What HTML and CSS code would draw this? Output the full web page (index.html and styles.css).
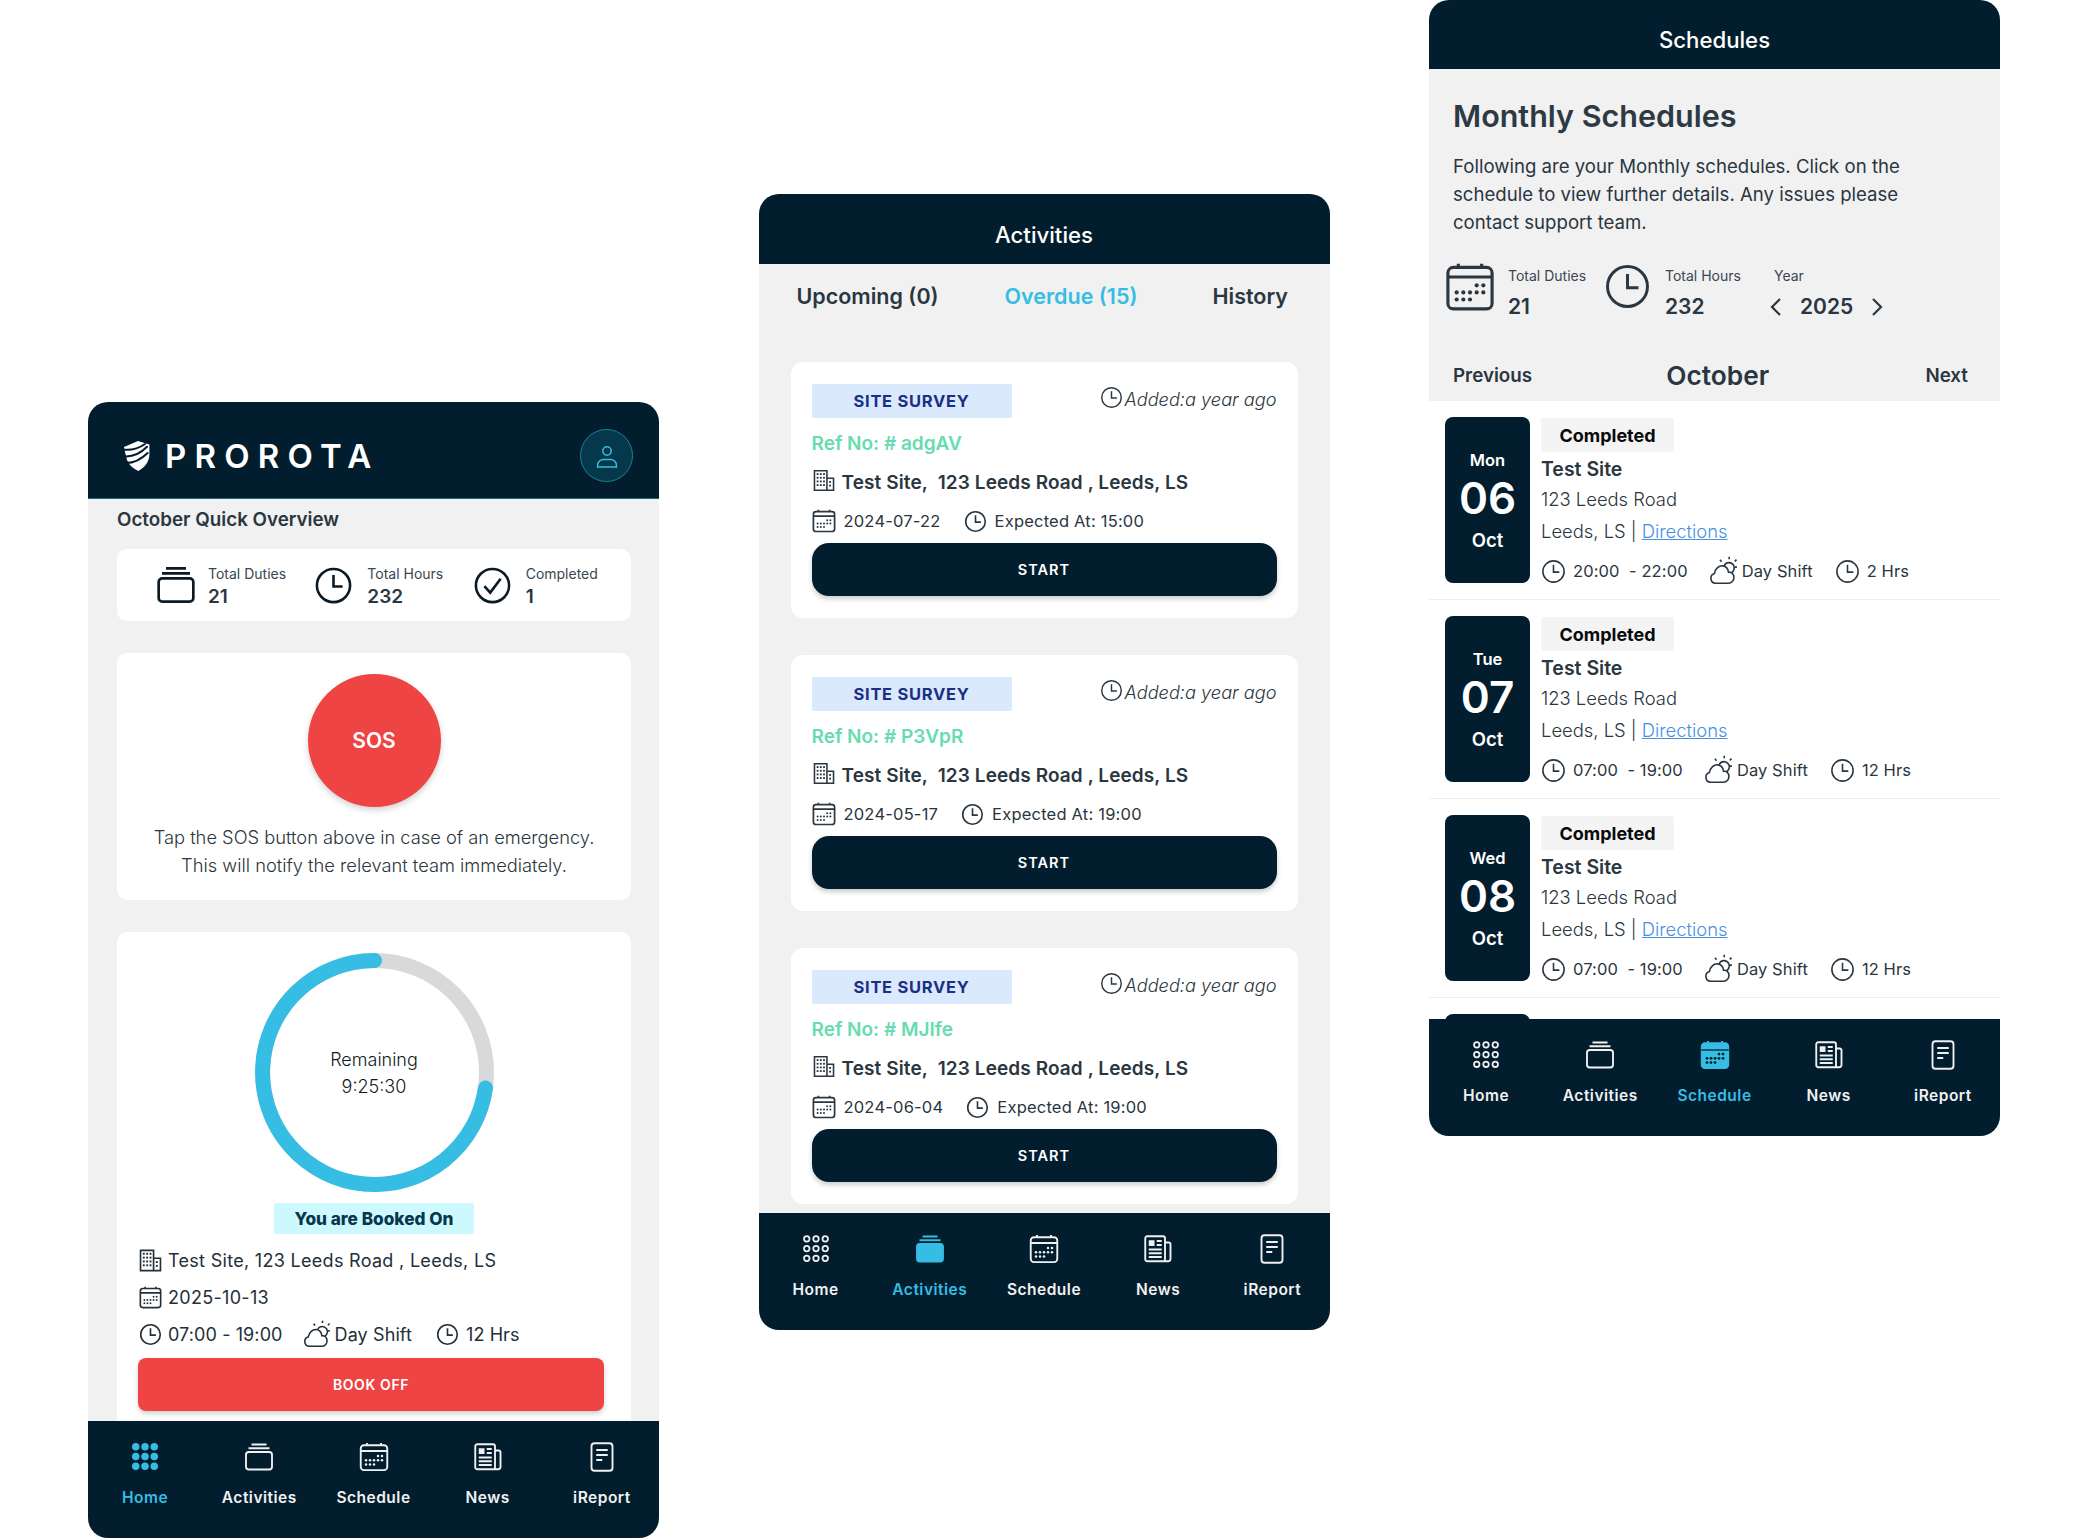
FILE: index.html
```html
<!DOCTYPE html>
<html lang="en">
<head>
  <meta charset="UTF-8" />
  <meta name="viewport" content="width=device-width, initial-scale=1.0"/>
  <title>Prorota</title>
  <link rel="stylesheet" href="styles.css">
</head>
<body>
  <svg class="sprite" width="0" height="0">
    <symbol id="i-clock" viewBox="0 0 24 24"><circle cx="12" cy="12" r="10.2"/><path d="M12 5.6v7h5.6"/></symbol>
    <symbol id="i-check" viewBox="0 0 24 24"><circle cx="12" cy="12" r="10.2"/><path d="M7 12.4l3.6 4 6.4-8.6"/></symbol>
    <symbol id="i-stack" viewBox="0 0 24 24"><rect x="1.6" y="8" width="20.8" height="14" rx="2.2"/><path d="M3.6 5h16.8M6 2h12"/></symbol>
    <symbol id="i-stack-fill" viewBox="0 0 24 24"><rect x="1.6" y="8" width="20.8" height="14" rx="2.2" fill="currentColor"/><path d="M3.6 5h16.8M6 2h12"/></symbol>
    <symbol id="i-cal" viewBox="0 0 24 24">
      <rect x="1.4" y="2.6" width="21.2" height="19.9" rx="2.6"/><path d="M1.4 7.2h21.2M6.4 .8v1.8M17.6 .8v1.8"/>
      <g fill="currentColor" stroke="none"><circle cx="15.2" cy="11.2" r="1"/><circle cx="18.4" cy="11.2" r="1"/><circle cx="5.6" cy="14.6" r="1"/><circle cx="8.8" cy="14.6" r="1"/><circle cx="12" cy="14.6" r="1"/><circle cx="15.2" cy="14.6" r="1"/><circle cx="18.4" cy="14.6" r="1"/><circle cx="5.6" cy="18" r="1"/><circle cx="8.8" cy="18" r="1"/><circle cx="12" cy="18" r="1"/></g>
    </symbol>
    <symbol id="i-cal-fill" viewBox="0 0 24 24">
      <rect x="1.4" y="2.6" width="21.2" height="19.9" rx="2.6" fill="currentColor"/><path d="M6.4 .8v1.8M17.6 .8v1.8M1.4 7.2h21.2" />
      <path d="M1 8h22" stroke="#021e2e" stroke-width="1"/>
      <g fill="#021e2e" stroke="none"><circle cx="15.2" cy="11.2" r="1.1"/><circle cx="18.4" cy="11.2" r="1.1"/><circle cx="5.6" cy="14.6" r="1.1"/><circle cx="8.8" cy="14.6" r="1.1"/><circle cx="12" cy="14.6" r="1.1"/><circle cx="15.2" cy="14.6" r="1.1"/><circle cx="18.4" cy="14.6" r="1.1"/><circle cx="5.6" cy="18" r="1.1"/><circle cx="8.8" cy="18" r="1.1"/><circle cx="12" cy="18" r="1.1"/></g>
    </symbol>
    <symbol id="i-dots" viewBox="0 0 24 24">
      <g stroke-width="1.4"><circle cx="4.6" cy="3.8" r="2.2"/><circle cx="12" cy="3.8" r="2.2"/><circle cx="19.4" cy="3.8" r="2.2"/><circle cx="4.6" cy="11.6" r="2.2"/><circle cx="12" cy="11.6" r="2.2"/><circle cx="19.4" cy="11.6" r="2.2"/><circle cx="4.6" cy="19.4" r="2.2"/><circle cx="12" cy="19.4" r="2.2"/><circle cx="19.4" cy="19.4" r="2.2"/></g>
    </symbol>
    <symbol id="i-dots-fill" viewBox="0 0 24 24">
      <g fill="currentColor" stroke="none"><circle cx="4.6" cy="3.8" r="3"/><circle cx="12" cy="3.8" r="3"/><circle cx="19.4" cy="3.8" r="3"/><circle cx="4.6" cy="11.6" r="3"/><circle cx="12" cy="11.6" r="3"/><circle cx="19.4" cy="11.6" r="3"/><circle cx="4.6" cy="19.4" r="3"/><circle cx="12" cy="19.4" r="3"/><circle cx="19.4" cy="19.4" r="3"/></g>
    </symbol>
    <symbol id="i-news" viewBox="0 0 24 24">
      <path d="M17.6 21.8H3.4a1.6 1.6 0 0 1-1.6-1.6V3.4a1.6 1.6 0 0 1 1.6-1.6h12.6a1.6 1.6 0 0 1 1.6 1.6zM17.6 6.8h3a1.4 1.4 0 0 1 1.4 1.4v11.6a2 2 0 0 1-2 2h-2.4"/>
      <rect x="4.6" y="5" width="4.6" height="4.6" fill="currentColor" stroke="none"/>
      <path d="M11 5.6h4M11 8.8h4M4.6 12.4h10.4M4.6 15.4h10.4M4.6 18.4h10.4"/>
    </symbol>
    <symbol id="i-report" viewBox="0 0 24 24"><rect x="3.6" y="1" width="16.8" height="22" rx="2.4"/><path d="M7.4 6.4h9.2M7.4 10.4h9.2M7.4 14.4h4.8"/></symbol>
    <symbol id="i-building" viewBox="0 0 24 24">
      <path d="M1.6 22.6V1.4h13.6v21.2zM15.2 9.6h7.2v13H1"/>
      <g fill="currentColor" stroke="none"><rect x="4" y="4" width="2" height="2"/><rect x="7.5" y="4" width="2" height="2"/><rect x="11" y="4" width="2" height="2"/><rect x="4" y="8" width="2" height="2"/><rect x="7.5" y="8" width="2" height="2"/><rect x="11" y="8" width="2" height="2"/><rect x="4" y="12" width="2" height="2"/><rect x="7.5" y="12" width="2" height="2"/><rect x="11" y="12" width="2" height="2"/><rect x="4" y="16" width="2" height="2"/><rect x="7.5" y="16" width="2" height="2"/><rect x="11" y="16" width="2" height="2"/><rect x="17.6" y="12.6" width="2" height="2"/><rect x="17.6" y="16.6" width="2" height="2"/></g>
    </symbol>
    <symbol id="i-weather" viewBox="0 0 28 28">
      <path d="M7 25.4a4.6 4.6 0 0 1-1-9c.8-4.6 4.4-7.6 7.8-7.2 3.2.4 5 3 5.4 6 2.6-.4 5 1.4 5 4.8 0 3-2.2 5.4-5 5.4z"/>
      <path d="M15 9.4a5 5 0 0 1 4.8-3.2 5 5 0 0 1 4 7.6 5 5 0 0 1-1.6 1.6M19.8 3V.8M25 5l1.6-1.6M27 10.4h-1.8M12.6 5.4L11.2 3.6"/>
    </symbol>
    <symbol id="i-user" viewBox="0 0 24 24"><circle cx="12" cy="7" r="4.2"/><path d="M2.6 23v-1.8c0-3.6 3-5.8 6-5.8h6.8c3 0 6 2.2 6 5.8V23z"/></symbol>
    <symbol id="i-left" viewBox="0 0 12 20"><path d="M10 2l-8 8 8 8"/></symbol>
    <symbol id="i-right" viewBox="0 0 12 20"><path d="M2 2l8 8-8 8"/></symbol>
  </svg>

  <!-- home screen -->
  <div class="phone phone-home">
    <header class="logo-bar">
      <div class="logo">
        <svg class="shield" viewBox="0 0 26 30">
          <path fill="#fff" d="M14 0l11.4 3.6V13c0 8-5 13.6-11 17C9 27.6 5 24 3 19L1 11 0 6z"/>
          <path fill="none" stroke="#021e2e" stroke-width="2" stroke-linecap="round" d="M-1 8.6C6 9.4 14 8 21 3M0 15.4c8 .6 16-2.4 23-9.6M2 22c7 0 15-3.4 21.6-10"/>
        </svg>
        <span class="logo-text">PROROTA</span>
      </div>
      <div class="avatar"><svg class="ico"><use href="#i-user"/></svg></div>
    </header>
    <main class="home-body">
      <h2 class="overview-title">October Quick Overview</h2>
      <section class="quick-stats">
        <div class="stat"><svg class="ico stat-ico stack-ico"><use href="#i-stack"/></svg><div><div class="stat-label">Total Duties</div><div class="stat-value">21</div></div></div>
        <div class="stat"><svg class="ico stat-ico"><use href="#i-clock"/></svg><div><div class="stat-label">Total Hours</div><div class="stat-value">232</div></div></div>
        <div class="stat"><svg class="ico stat-ico"><use href="#i-check"/></svg><div><div class="stat-label">Completed</div><div class="stat-value">1</div></div></div>
      </section>
      <section class="sos-card">
        <button class="sos-btn">SOS</button>
        <p class="sos-text">Tap the SOS button above in case of an emergency.<br>This will notify the relevant team immediately.</p>
      </section>
      <section class="duty-card">
        <div class="ring">
          <svg viewBox="0 0 239 239" width="239" height="239">
            <circle cx="119.5" cy="119.5" r="112" class="ring-track"/>
            <path class="ring-bar" d="M230.5 135A112 112 0 1 1 119.5 7.5"/>
          </svg>
          <div class="ring-text">Remaining<br>9:25:30</div>
        </div>
        <div class="booked">You are Booked On</div>
        <div class="duty-row"><svg class="ico duty-ico"><use href="#i-building"/></svg><span>Test Site, 123 Leeds Road , Leeds, LS</span></div>
        <div class="duty-row"><svg class="ico duty-ico"><use href="#i-cal"/></svg><span>2025-10-13</span></div>
        <div class="duty-row duty-times">
          <svg class="ico duty-ico"><use href="#i-clock"/></svg><span>07:00 - 19:00</span>
          <svg class="ico weather-ico"><use href="#i-weather"/></svg><span>Day Shift</span>
          <svg class="ico duty-ico hrs-ico"><use href="#i-clock"/></svg><span>12 Hrs</span>
        </div>
        <button class="book-off">BOOK OFF</button>
      </section>
    </main>
    <nav class="tabbar">
      <a class="tab active"><svg class="ico"><use href="#i-dots-fill"/></svg><span>Home</span></a>
      <a class="tab"><svg class="ico"><use href="#i-stack"/></svg><span>Activities</span></a>
      <a class="tab"><svg class="ico"><use href="#i-cal"/></svg><span>Schedule</span></a>
      <a class="tab"><svg class="ico"><use href="#i-news"/></svg><span>News</span></a>
      <a class="tab"><svg class="ico"><use href="#i-report"/></svg><span>iReport</span></a>
    </nav>
  </div>

  <!-- activities screen -->
  <div class="phone phone-activities">
    <header class="title-bar">Activities</header>
    <main class="activities-body">
      <div class="filter-tabs">
        <span>Upcoming (0)</span>
        <span class="current">Overdue (15)</span>
        <span>History</span>
      </div>

      <article class="job">
        <div class="job-top"><span class="job-tag">SITE SURVEY</span><span class="job-added"><svg class="ico"><use href="#i-clock"/></svg>Added:a year ago</span></div>
        <div class="job-ref">Ref No: # adgAV</div>
        <div class="job-site"><svg class="ico"><use href="#i-building"/></svg>Test Site,&nbsp; 123 Leeds Road , Leeds, LS</div>
        <div class="job-when"><svg class="ico"><use href="#i-cal"/></svg><span>2024-07-22</span><svg class="ico job-clock"><use href="#i-clock"/></svg><span>Expected At: 15:00</span></div>
        <button class="start-btn">START</button>
      </article>

      <article class="job">
        <div class="job-top"><span class="job-tag">SITE SURVEY</span><span class="job-added"><svg class="ico"><use href="#i-clock"/></svg>Added:a year ago</span></div>
        <div class="job-ref">Ref No: # P3VpR</div>
        <div class="job-site"><svg class="ico"><use href="#i-building"/></svg>Test Site,&nbsp; 123 Leeds Road , Leeds, LS</div>
        <div class="job-when"><svg class="ico"><use href="#i-cal"/></svg><span>2024-05-17</span><svg class="ico job-clock"><use href="#i-clock"/></svg><span>Expected At: 19:00</span></div>
        <button class="start-btn">START</button>
      </article>

      <article class="job">
        <div class="job-top"><span class="job-tag">SITE SURVEY</span><span class="job-added"><svg class="ico"><use href="#i-clock"/></svg>Added:a year ago</span></div>
        <div class="job-ref">Ref No: # MJIfe</div>
        <div class="job-site"><svg class="ico"><use href="#i-building"/></svg>Test Site,&nbsp; 123 Leeds Road , Leeds, LS</div>
        <div class="job-when"><svg class="ico"><use href="#i-cal"/></svg><span>2024-06-04</span><svg class="ico job-clock"><use href="#i-clock"/></svg><span>Expected At: 19:00</span></div>
        <button class="start-btn">START</button>
      </article>
    </main>
    <nav class="tabbar">
      <a class="tab"><svg class="ico"><use href="#i-dots"/></svg><span>Home</span></a>
      <a class="tab active"><svg class="ico"><use href="#i-stack-fill"/></svg><span>Activities</span></a>
      <a class="tab"><svg class="ico"><use href="#i-cal"/></svg><span>Schedule</span></a>
      <a class="tab"><svg class="ico"><use href="#i-news"/></svg><span>News</span></a>
      <a class="tab"><svg class="ico"><use href="#i-report"/></svg><span>iReport</span></a>
    </nav>
  </div>

  <!-- schedule screen -->
  <div class="phone phone-schedule">
    <header class="title-bar">Schedules</header>
    <main class="schedule-body">
      <section class="summary">
        <h1>Monthly Schedules</h1>
        <p>Following are your Monthly schedules. Click on the schedule to view further details. Any issues please contact support team.</p>
        <div class="month-stats">
          <div class="mstat mstat-duties"><svg class="ico"><use href="#i-cal"/></svg><div><div class="stat-label">Total Duties</div><div class="mstat-value">21</div></div></div>
          <div class="mstat mstat-hours"><svg class="ico"><use href="#i-clock"/></svg><div><div class="stat-label">Total Hours</div><div class="mstat-value">232</div></div></div>
          <div class="mstat-year">
            <div class="stat-label">Year</div>
            <div class="year-pick"><svg class="ico chev"><use href="#i-left"/></svg><span class="mstat-value">2025</span><svg class="ico chev"><use href="#i-right"/></svg></div>
          </div>
        </div>
        <div class="month-nav"><span>Previous</span><strong>October</strong><span>Next</span></div>
      </section>

      <article class="shift">
        <div class="shift-date"><span class="d-name">Mon</span><span class="d-num">06</span><span class="d-month">Oct</span></div>
        <div class="shift-info">
          <div class="shift-status">Completed</div>
          <div class="shift-site">Test Site</div>
          <div class="shift-addr">123 Leeds Road</div>
          <div class="shift-addr">Leeds, LS | <a href="#">Directions</a></div>
          <div class="shift-meta"><svg class="ico m-ico"><use href="#i-clock"/></svg><span>20:00&nbsp; - 22:00</span><svg class="ico m-weather"><use href="#i-weather"/></svg><span>Day Shift</span><svg class="ico m-ico m-hrs"><use href="#i-clock"/></svg><span>2 Hrs</span></div>
        </div>
      </article>

      <article class="shift">
        <div class="shift-date"><span class="d-name">Tue</span><span class="d-num">07</span><span class="d-month">Oct</span></div>
        <div class="shift-info">
          <div class="shift-status">Completed</div>
          <div class="shift-site">Test Site</div>
          <div class="shift-addr">123 Leeds Road</div>
          <div class="shift-addr">Leeds, LS | <a href="#">Directions</a></div>
          <div class="shift-meta"><svg class="ico m-ico"><use href="#i-clock"/></svg><span>07:00&nbsp; - 19:00</span><svg class="ico m-weather"><use href="#i-weather"/></svg><span>Day Shift</span><svg class="ico m-ico m-hrs"><use href="#i-clock"/></svg><span>12 Hrs</span></div>
        </div>
      </article>

      <article class="shift">
        <div class="shift-date"><span class="d-name">Wed</span><span class="d-num">08</span><span class="d-month">Oct</span></div>
        <div class="shift-info">
          <div class="shift-status">Completed</div>
          <div class="shift-site">Test Site</div>
          <div class="shift-addr">123 Leeds Road</div>
          <div class="shift-addr">Leeds, LS | <a href="#">Directions</a></div>
          <div class="shift-meta"><svg class="ico m-ico"><use href="#i-clock"/></svg><span>07:00&nbsp; - 19:00</span><svg class="ico m-weather"><use href="#i-weather"/></svg><span>Day Shift</span><svg class="ico m-ico m-hrs"><use href="#i-clock"/></svg><span>12 Hrs</span></div>
        </div>
      </article>

      <article class="shift">
        <div class="shift-date"></div>
      </article>
    </main>
    <nav class="tabbar">
      <a class="tab"><svg class="ico"><use href="#i-dots"/></svg><span>Home</span></a>
      <a class="tab"><svg class="ico"><use href="#i-stack"/></svg><span>Activities</span></a>
      <a class="tab active"><svg class="ico"><use href="#i-cal-fill"/></svg><span>Schedule</span></a>
      <a class="tab"><svg class="ico"><use href="#i-news"/></svg><span>News</span></a>
      <a class="tab"><svg class="ico"><use href="#i-report"/></svg><span>iReport</span></a>
    </nav>
  </div>
</body>
</html>
```

FILE: styles.css
```css
* {
  box-sizing: border-box;
}
html, body {
  margin: 0;
  height: 1539px;
  overflow: hidden;
}
body {
  font-family: Inter, 'Noto Sans', sans-serif;
  background-color: #fff;
  color: #2a3640;
  display: flex;
  align-items: flex-start;
  gap: 99.5px;
  padding-left: 88px;
}
.sprite {
  position: absolute;
}
.ico {
  fill: none;
  stroke: currentColor;
  stroke-width: 1.5;
  flex: none;
}
button {
  font-family: inherit;
  border: none;
  display: block;
}

/* phone frames */
.phone {
  width: 571px;
  height: 1136px;
  flex: none;
  border-radius: 20px;
  overflow: hidden;
  background-color: #f1f1f2;
  display: flex;
  flex-direction: column;
}
.phone-home { margin-top: 402px; }
.phone-activities { margin-top: 194px; }
.phone-schedule { margin-top: 0; }

.title-bar {
  height: 69px;
  flex: none;
  background-color: #021e2e;
  color: #fff;
  font-size: 22.2px;
  font-weight: 500;
  line-height: 24px;
  padding-top: 28px;
  text-align: center;
}
.phone-activities .title-bar {
  height: 70px;
  padding-top: 29px;
}

/* bottom nav */
.tabbar {
  height: 117px;
  flex: none;
  background-color: #021e2e;
  display: flex;
  position: relative;
}
.tab {
  flex: 1;
  display: flex;
  flex-direction: column;
  align-items: center;
  padding-top: 21px;
  color: #f1f1f1;
  font-size: 15.5px;
  font-weight: 600;
  line-height: 20px;
  letter-spacing: 0.5px;
}
.tab .ico {
  width: 30px;
  height: 30px;
  margin-bottom: 16px;
}
.tab.active {
  color: #36bde4;
}

/* home */
.logo-bar {
  height: 97px;
  flex: none;
  background-color: #021e2e;
  border-bottom: 1px solid #1d6b80;
  display: flex;
  align-items: center;
  justify-content: space-between;
  padding: 11px 26px 0 36px;
}
.logo {
  display: flex;
  align-items: center;
  gap: 15px;
}
.shield {
  width: 26px;
  height: 30px;
}
.logo-text {
  color: #fff;
  font-size: 33px;
  font-weight: 600;
  letter-spacing: 8.2px;
}
.avatar {
  width: 53px;
  height: 53px;
  border-radius: 50%;
  background-color: #06384c;
  border: 1px solid #1f8097;
  color: #36bde4;
  display: flex;
  align-items: center;
  justify-content: center;
}
.avatar .ico {
  width: 24px;
  height: 24px;
}
.home-body {
  flex: 1;
  min-height: 0;
  overflow: hidden;
  padding: 9px 28px 0 29px;
}
.overview-title {
  margin: 0 0 17px;
  font-size: 18.8px;
  font-weight: 600;
  line-height: 24px;
}
.quick-stats {
  height: 72px;
  background-color: #fff;
  border-radius: 10px;
  display: flex;
  align-items: center;
  padding-left: 39px;
}
.stat {
  width: 158.5px;
  display: flex;
  align-items: center;
  gap: 14px;
  color: #2a3640;
}
.stat > div {
  padding-top: 5px;
}
.stat-ico {
  width: 39px;
  height: 39px;
  color: #0c1a24;
  stroke-width: 1.6;
}
.stack-ico {
  width: 40px;
  height: 40px;
  margin-right: -2px;
}
.stat-label {
  font-size: 14px;
  font-weight: 400;
  line-height: 18px;
  color: #3a4650;
}
.stat-value {
  font-size: 19px;
  font-weight: 600;
  line-height: 26px;
  margin-top: 1px;
}
.sos-card {
  height: 247px;
  margin-top: 32px;
  background-color: #fff;
  border-radius: 10px;
  padding-top: 21px;
}
.sos-btn {
  width: 133px;
  height: 133px;
  margin: 0 auto;
  border-radius: 50%;
  background-color: #ef4444;
  color: #fff;
  font-size: 21px;
  font-weight: 600;
  box-shadow: 0 3px 6px rgba(0, 0, 0, 0.18);
}
.sos-text {
  margin: 16px 0 0;
  text-align: center;
  font-size: 18.3px;
  font-weight: 300;
  line-height: 28px;
}
.duty-card {
  height: 520px;
  margin-top: 32px;
  background-color: #fff;
  border-radius: 10px;
  padding-top: 21px;
}
.ring {
  width: 239px;
  height: 239px;
  margin: 0 auto;
  position: relative;
}
.ring svg {
  display: block;
}
.ring-track, .ring-bar {
  fill: none;
  stroke-width: 15;
}
.ring-track {
  stroke: #d9d9d9;
}
.ring-bar {
  stroke: #36bde4;
  stroke-linecap: round;
}
.ring-text {
  position: absolute;
  inset: 0;
  display: flex;
  align-items: center;
  justify-content: center;
  text-align: center;
  font-size: 18px;
  font-weight: 300;
  line-height: 27px;
  color: #101a22;
}
.booked {
  width: 200px;
  height: 31px;
  margin: 11px auto 8px;
  background-color: #cdf8fd;
  border-radius: 2px;
  color: #07364f;
  font-size: 17.2px;
  font-weight: 800;
  line-height: 31px;
  text-align: center;
}
.duty-row {
  height: 37px;
  display: flex;
  align-items: center;
  padding-left: 22px;
  font-size: 18px;
  color: #232f39;
  letter-spacing: 0.3px;
}
.duty-times {
  letter-spacing: 0.1px;
}
.duty-ico {
  width: 23px;
  height: 23px;
  margin-right: 6px;
  stroke-width: 1.7;
}
.weather-ico {
  width: 29px;
  height: 29px;
  margin: 0 4px 0 19px;
}
.hrs-ico {
  margin-left: 24px;
  margin-right: 7px;
}
.book-off {
  width: 466px;
  height: 53px;
  margin: 5px 0 0 21px;
  border-radius: 8px;
  background-color: #ef4444;
  color: #fff;
  font-size: 14px;
  font-weight: 600;
  letter-spacing: 0.6px;
  box-shadow: 0 3px 5px rgba(0, 0, 0, 0.18);
}

/* activities */
.activities-body {
  flex: 1;
  min-height: 0;
  overflow: hidden;
}
.filter-tabs {
  height: 64px;
  display: flex;
  align-items: center;
  gap: 66px;
  padding-left: 38px;
  margin-bottom: 34px;
  font-size: 21.5px;
  font-weight: 600;
}
.filter-tabs .current {
  color: #36bde4;
  margin-right: 9px;
}
.job {
  width: 507px;
  height: 256px;
  margin: 0 0 37px 32px;
  padding: 22px 21px 21px;
  background-color: #fff;
  border-radius: 12px;
}
.job-top {
  height: 34px;
  display: flex;
  justify-content: space-between;
  align-items: flex-start;
}
.job-tag {
  width: 200px;
  height: 34px;
  background-color: #dbe9fd;
  border-radius: 2px;
  color: #1a2f85;
  font-size: 16.5px;
  font-weight: 700;
  line-height: 35px;
  letter-spacing: 0.7px;
  text-align: center;
}
.job-added {
  display: flex;
  align-items: center;
  gap: 2px;
  height: 30px;
  font-size: 18.2px;
  font-style: italic;
  font-weight: 300;
  color: #2a3640;
}
.job-added .ico {
  width: 23px;
  height: 23px;
  margin-bottom: 4px;
}
.job-ref {
  margin-top: 14px;
  font-size: 19px;
  font-weight: 600;
  line-height: 24px;
  color: #66dcb0;
}
.job-site {
  margin-top: 13px;
  height: 26px;
  display: flex;
  align-items: center;
  gap: 7px;
  font-size: 19px;
  font-weight: 600;
  letter-spacing: 0.1px;
  padding-left: 1px;
}
.job-site .ico {
  width: 22px;
  height: 23px;
  margin-bottom: 4px;
  stroke-width: 1.7;
}
.job-when {
  margin-top: 13px;
  height: 26px;
  display: flex;
  align-items: center;
  font-size: 16.5px;
  letter-spacing: 0.2px;
}
.job-when .ico {
  width: 24px;
  height: 24px;
  margin-right: 8px;
  stroke-width: 1.7;
}
.job-when .job-clock {
  width: 23px;
  height: 23px;
  margin-left: 23px;
}
.start-btn {
  width: 465px;
  height: 53px;
  margin-top: 9px;
  border-radius: 17px;
  background-color: #021e2e;
  color: #fff;
  font-size: 14.5px;
  font-weight: 600;
  letter-spacing: 1px;
  box-shadow: 0 3px 5px rgba(0, 0, 0, 0.2);
}

/* schedule */
.schedule-body {
  flex: 1;
  min-height: 0;
  overflow: hidden;
  background-color: #fff;
}
.summary {
  height: 332px;
  background-color: #f1f1f2;
  padding: 27px 24px 0;
}
.summary h1 {
  margin: 0;
  font-size: 30.5px;
  font-weight: 600;
  line-height: 40px;
  color: #2d3a45;
}
.summary p {
  margin: 16px 0 0;
  font-size: 18.6px;
  line-height: 28px;
  width: 465px;
}
.month-stats {
  display: flex;
  height: 89px;
  margin: 28px 0 0 -6px;
}
.mstat {
  display: flex;
  align-items: flex-start;
  gap: 13px;
  width: 159px;
}
.mstat-duties .ico {
  width: 50px;
  height: 50px;
  margin: -2px 0 0 -2px;
}
.mstat-hours {
  width: 168px;
  gap: 14px;
}
.mstat-hours .ico {
  width: 47px;
  height: 47px;
  margin: -1px 0 0 -2px;
}
.mstat .stat-label,
.mstat-year .stat-label {
  margin-top: 3px;
}
.mstat-value {
  font-size: 21px;
  font-weight: 600;
  line-height: 26px;
  margin-top: 9px;
  display: block;
}
.year-pick {
  display: flex;
  align-items: flex-start;
  margin-left: -4px;
}
.year-pick .mstat-value {
  margin: 9px 18px 0 18px;
}
.chev {
  width: 12px;
  height: 20px;
  margin-top: 12px;
  stroke-width: 2.2;
}
.month-nav {
  height: 44px;
  display: flex;
  align-items: center;
  justify-content: space-between;
  padding-right: 8px;
  font-size: 18.8px;
  font-weight: 600;
}
.month-nav strong {
  font-size: 26.3px;
  font-weight: 600;
  margin-right: 22px;
}
.shift {
  height: 199px;
  display: flex;
  gap: 11px;
  padding: 16px 0 0 16px;
  border-bottom: 1px solid #eee;
}
.shift-date {
  width: 85px;
  height: 166px;
  flex: none;
  border-radius: 8px;
  background-color: #021e2e;
  color: #fff;
  display: flex;
  flex-direction: column;
  align-items: center;
  padding-top: 32px;
}
.d-name {
  font-size: 16.5px;
  font-weight: 600;
  line-height: 22px;
}
.d-num {
  font-size: 44px;
  font-weight: 600;
  line-height: 52px;
  margin-top: 1px;
}
.d-month {
  font-size: 18.5px;
  font-weight: 600;
  line-height: 24px;
  margin-top: 4px;
}
.shift-status {
  width: 133px;
  height: 34px;
  margin-top: 1px;
  background-color: #f4f4f4;
  border-radius: 2px;
  color: #0a0a0a;
  font-size: 18px;
  font-weight: 700;
  line-height: 36px;
  text-align: center;
}
.shift-site {
  margin-top: 4px;
  font-size: 19.5px;
  font-weight: 600;
  line-height: 26px;
}
.shift-addr {
  font-size: 18.4px;
  font-weight: 300;
  line-height: 30px;
  margin-top: 2px;
}
.shift-addr a {
  color: #4a90e2;
}
.shift-meta {
  margin-top: 12px;
  height: 26px;
  display: flex;
  align-items: center;
  font-size: 16.5px;
  letter-spacing: 0.1px;
}
.m-ico {
  width: 25px;
  height: 25px;
  margin-right: 7px;
}
.m-weather {
  width: 30px;
  height: 30px;
  margin: 0 4px 0 20px;
}
.m-hrs {
  margin-left: 22px;
}
```
